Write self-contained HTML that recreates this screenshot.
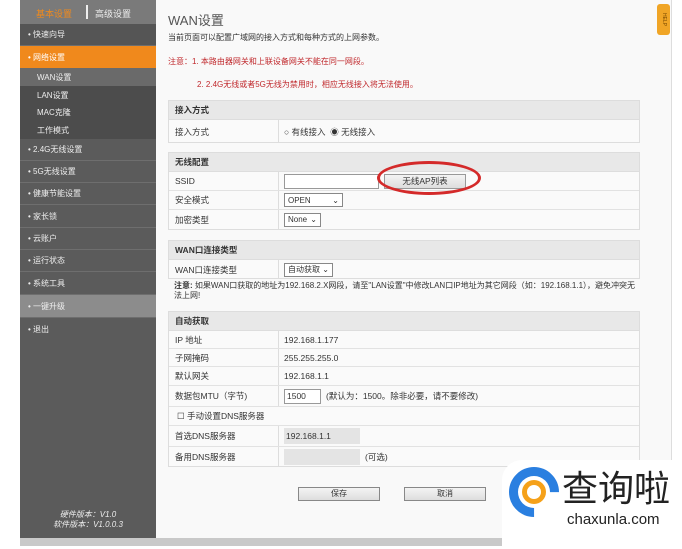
<!DOCTYPE html><html><head><meta charset="utf-8"><style>
*{margin:0;padding:0;box-sizing:border-box}
body{width:682px;height:549px;background:#fff;position:relative;overflow:hidden;font-family:"Liberation Sans","Noto Sans CJK SC",sans-serif;font-size:8.5px;color:#333}
.a{position:absolute}
#sb{left:20px;top:0;width:136px;height:538px;background:#5b5b5b}
.it{position:absolute;left:20px;width:136px;color:#eee;font-size:8px;padding-left:8px;border-bottom:1px solid #6e6e6e;display:flex;align-items:center}
.sub{position:absolute;left:20px;width:136px;color:#eee;font-size:8px;padding-left:17px;display:flex;align-items:center;background:#4c4c4c}
#main{left:156px;top:0;width:516px;height:538px;background:#f9f9f9;border-right:1px solid #ddd}
.tb{position:absolute;left:168px;width:472px;border:1px solid #ddd;background:#fafafa}
.hd{height:19px;background:#e8e8e8;font-weight:bold;padding-left:6px;line-height:19px;border-bottom:1px solid #ddd}
.r{display:flex;border-bottom:1px solid #e2e2e2;align-items:center}
.r:last-child{border-bottom:none}
.l{width:110px;padding-left:6px;border-right:1px solid #ddd;height:100%;display:flex;align-items:center}
.v{padding-left:5px;display:flex;align-items:center;gap:5px}
.sel{border:1px solid #888;background:#fff;height:14px;padding:0 3px;display:flex;align-items:center;justify-content:space-between;font-size:8px}
.inp{border:1px solid #999;background:#fff;height:15px}
.btn{position:absolute;border:1px solid #888;background:linear-gradient(#f4f4f4,#ddd);text-align:center;font-size:8px;line-height:12px}
.red{color:#c0282c}
</style></head><body>
<div class="a" id="sb"></div>
<div class="a" style="left:20px;top:0;width:136px;height:24px;background:#7a7a7a"></div>
<div class="a" style="left:36px;top:7px;color:#f08a1c;font-size:9px">基本设置</div>
<div class="a" style="left:86px;top:5px;width:2px;height:14px;background:#eee"></div>
<div class="a" style="left:95px;top:7px;color:#eee;font-size:9px">高级设置</div>
<div class="it" style="top:24px;height:22px;background:#555">• 快速向导</div>
<div class="it" style="top:46px;height:22px;background:#f0891c;color:#fff;border:none">• 网络设置</div>
<div class="sub" style="top:68px;height:18px;background:#6a6a6a">WAN设置</div>
<div class="sub" style="top:86px;height:18px">LAN设置</div>
<div class="sub" style="top:104px;height:17px">MAC克隆</div>
<div class="sub" style="top:121px;height:18px">工作模式</div>
<div class="it" style="top:139px;height:22px">• 2.4G无线设置</div>
<div class="it" style="top:161px;height:22px">• 5G无线设置</div>
<div class="it" style="top:183px;height:22px">• 健康节能设置</div>
<div class="it" style="top:205px;height:23px">• 家长锁</div>
<div class="it" style="top:228px;height:22px">• 云账户</div>
<div class="it" style="top:250px;height:22px">• 运行状态</div>
<div class="it" style="top:272px;height:23px">• 系统工具</div>
<div class="it" style="top:295px;height:23px;background:#8c8c8c">• 一键升级</div>
<div class="it" style="top:318px;height:22px;border:none">• 退出</div>
<div class="a" style="left:20px;top:510px;width:136px;text-align:center;color:#eee;font-style:italic;font-size:8px;line-height:10px">硬件版本：V1.0<br>软件版本：V1.0.0.3</div>
<div class="a" id="main"></div>
<div class="a" style="left:20px;top:538px;width:652px;height:8px;background:#c9c9c9"></div>
<div class="a" style="left:657px;top:4px;width:13px;height:31px;background:#f0a526;border-radius:3px;color:#7a4a00;font-size:5px;writing-mode:vertical-rl;text-align:center;line-height:13px">HELP</div>
<div class="a" style="left:168px;top:10px;font-size:13px;color:#555">WAN设置</div>
<div class="a" style="left:168px;top:32px;font-size:8px">当前页面可以配置广域网的接入方式和每种方式的上网参数。</div>
<div class="a red" style="left:168px;top:56px;font-size:8px">注意：1. 本路由器网关和上联设备网关不能在同一网段。</div>
<div class="a red" style="left:197px;top:79px;font-size:8px">2. 2.4G无线或者5G无线为禁用时，相应无线接入将无法使用。</div>
<div class="tb" style="top:100px;height:43px"><div class="hd">接入方式</div><div class="r" style="height:23px"><div class="l">接入方式</div><div class="v">○ 有线接入 &nbsp;◉ 无线接入</div></div></div>
<div class="tb" style="top:152px;height:78px"><div class="hd">无线配置</div>
<div class="r" style="height:19px"><div class="l">SSID</div><div class="v"><div class="inp" style="width:95px"></div><div class="inp" style="width:82px;background:linear-gradient(#f4f4f4,#ddd);text-align:center;line-height:13px">无线AP列表</div></div></div>
<div class="r" style="height:19px"><div class="l">安全模式</div><div class="v"><div class="sel" style="width:59px">OPEN<span>⌄</span></div></div></div>
<div class="r" style="height:19px"><div class="l">加密类型</div><div class="v"><div class="sel" style="width:37px">None<span>⌄</span></div></div></div></div>
<div class="a" style="left:377px;top:161px;width:104px;height:34px;border:3px solid #d42a2a;border-radius:50%"></div>
<div class="tb" style="top:240px;height:39px"><div class="hd">WAN口连接类型</div><div class="r" style="height:19px"><div class="l">WAN口连接类型</div><div class="v"><div class="sel" style="width:49px">自动获取<span>⌄</span></div></div></div></div>
<div class="a" style="left:174px;top:281px;width:462px;font-size:8px;line-height:10px"><b>注意:</b> 如果WAN口获取的地址为192.168.2.X网段，请至"LAN设置"中修改LAN口IP地址为其它网段（如：192.168.1.1），避免冲突无法上网!</div>
<div class="tb" style="top:311px;height:156px"><div class="hd">自动获取</div>
<div class="r" style="height:18px"><div class="l">IP 地址</div><div class="v">192.168.1.177</div></div>
<div class="r" style="height:18px"><div class="l">子网掩码</div><div class="v">255.255.255.0</div></div>
<div class="r" style="height:19px"><div class="l">默认网关</div><div class="v">192.168.1.1</div></div>
<div class="r" style="height:21px"><div class="l">数据包MTU（字节)</div><div class="v"><div class="inp" style="width:37px;padding-left:2px;line-height:13px">1500</div>(默认为：1500。除非必要，请不要修改)</div></div>
<div class="r" style="height:19px;padding-left:8px">☐ 手动设置DNS服务器</div>
<div class="r" style="height:21px"><div class="l">首选DNS服务器</div><div class="v"><div style="width:76px;height:16px;background:#e4e4e4;padding-left:2px;line-height:16px">192.168.1.1</div></div></div>
<div class="r" style="height:20px"><div class="l">备用DNS服务器</div><div class="v"><div style="width:76px;height:16px;background:#e4e4e4"></div>(可选)</div></div></div>
<div class="btn" style="left:298px;top:487px;width:82px;height:14px">保存</div>
<div class="btn" style="left:404px;top:487px;width:82px;height:14px">取消</div>
<div class="a" style="left:502px;top:460px;width:180px;height:89px;background:#fff;border-radius:20px 0 0 0"></div>
<div class="a" style="left:509px;top:467px;width:50px;height:50px;border-radius:50%;border:9px solid #2a7fe0;border-right-color:transparent;transform:rotate(45deg)"></div>
<div class="a" style="left:522px;top:480px;width:24px;height:24px;border-radius:50%;background:#f5a11a"></div>
<div class="a" style="left:527px;top:485px;width:14px;height:14px;border-radius:50%;background:#fff"></div>
<div class="a" style="left:562px;top:464px;font-size:36px;color:#222;font-family:'Noto Sans CJK SC',sans-serif;line-height:44px">查询啦</div>
<div class="a" style="left:567px;top:511px;font-size:15px;color:#222">chaxunla.com</div>
</body></html>
